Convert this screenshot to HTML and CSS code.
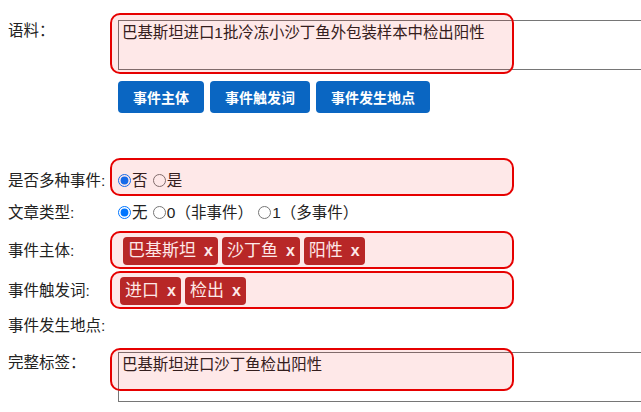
FILE: index.html
```html
<!DOCTYPE html>
<html lang="zh">
<head>
    <meta charset="UTF-8">
    <title>事件标注</title>
    <link rel="stylesheet" href="styles.css">
</head>
<body>

    <div class="form">
        <div class="row row-corpus">
            <label class="lbl">语料：</label>
            <div class="field">
                <textarea class="text">巴基斯坦进口1批冷冻小沙丁鱼外包装样本中检出阳性</textarea>
                <span class="mark mark-corpus"></span>
                <div class="btns">
                    <button class="btn">事件主体</button>
                    <button class="btn">事件触发词</button>
                    <button class="btn">事件发生地点</button>
                </div>
            </div>
        </div>

        <div class="row row-multi">
            <label class="lbl">是否多种事件:</label>
            <div class="field">
                <input type="radio" name="multi" class="radio" checked>否
                <input type="radio" name="multi" class="radio">是
                <span class="mark mark-line"></span>
            </div>
        </div>

        <div class="row row-type">
            <label class="lbl">文章类型:</label>
            <div class="field">
                <input type="radio" name="type" class="radio" checked>无
                <input type="radio" name="type" class="radio">0（非事件）
                <input type="radio" name="type" class="radio">1（多事件）
            </div>
        </div>

        <div class="row row-tags">
            <label class="lbl">事件主体:</label>
            <div class="field tags">
                <span class="tag">巴基斯坦<b>x</b></span>
                <span class="tag">沙丁鱼<b>x</b></span>
                <span class="tag">阳性<b>x</b></span>
                <span class="mark mark-tags"></span>
            </div>
        </div>

        <div class="row row-tags row-trigger">
            <label class="lbl">事件触发词:</label>
            <div class="field tags">
                <span class="tag">进口<b>x</b></span>
                <span class="tag">检出<b>x</b></span>
                <span class="mark mark-tags"></span>
            </div>
        </div>

        <div class="row row-place">
            <label class="lbl">事件发生地点:</label>
            <div class="field"></div>
        </div>

        <div class="row row-full">
            <label class="lbl">完整标签：</label>
            <div class="field">
                <textarea class="text">巴基斯坦进口沙丁鱼检出阳性</textarea>
                <span class="mark mark-full"></span>
            </div>
        </div>
    </div>

</body>
</html>
```

FILE: styles.css
```css
body {
    margin: 8px 0 0 8px;
    font-family: "Liberation Sans", "Noto Sans CJK SC", sans-serif;
    font-size: 15.5px;
    color: #222;
    background: #fff;
}
.form {
    overflow: hidden;
    height: 404px;
}
.row {
    display: flex;
    align-items: flex-start;
}
.lbl {
    width: 110px;
    flex-shrink: 0;
    line-height: 20px;
}
.field {
    position: relative;
    flex: 1;
    min-width: 0;
    line-height: 20px;
    white-space: nowrap;
}
.text {
    display: block;
    width: 600px;
    height: 50px;
    box-sizing: border-box;
    margin: 0;
    padding: 2px 3px;
    border: 1px solid #767676;
    font-family: "Liberation Sans", "Noto Sans CJK SC", sans-serif;
    font-size: 15.4px;
    line-height: 20px;
    color: #222;
    resize: none;
}
.btns {
    display: flex;
    gap: 6px;
    margin-top: 11px;
}
.btn {
    height: 32px;
    padding: 0 15px;
    border: none;
    border-radius: 4px;
    background: #0a66c2;
    color: white;
    font-family: "Liberation Sans", "Noto Sans CJK SC", sans-serif;
    font-size: 14px;
    font-weight: bold;
}
.radio {
    width: 13px;
    height: 13px;
    margin: 0 1px 0 1px;
    vertical-align: -1px;
}
.radio:first-child {
    margin-left: 0;
}
.tags {
    display: flex;
    gap: 4px;
    padding-left: 5px;
}
.tag {
    display: inline-block;
    padding: 2px 5px;
    border-radius: 4px;
    background: #b22b2b;
    color: white;
    font-size: 17px;
    line-height: 24px;
}
.tag b {
    margin-left: 8px;
    font-size: 16px;
}
.row-trigger .tags {
    padding-left: 2px;
}

/* annotation highlight */
.mark {
    position: absolute;
    left: -8px;
    width: 404px;
    box-sizing: border-box;
    border: 2px solid #e60000;
    border-radius: 10px;
    background: rgba(240, 0, 0, 0.09);
    pointer-events: none;
}
.mark-corpus {
    top: -7px;
    height: 61px;
}
.mark-line {
    top: -13px;
    height: 38px;
}
.mark-tags {
    top: -6px;
    height: 38px;
}
.mark-full {
    top: -4px;
    height: 43px;
}

.row-corpus { margin-top: 12px; }
.row-corpus .lbl { padding-top: 1px; }
.row-multi { margin-top: 58px; }
.row-type { margin-top: 12px; }
.row-tags { margin-top: 14px; align-items: center; }
.row-trigger { margin-top: 12px; }
.row-place { margin-top: 11px; }
.row-full { margin-top: 16px; }
.row-full .lbl { padding-top: 1px; }
```
